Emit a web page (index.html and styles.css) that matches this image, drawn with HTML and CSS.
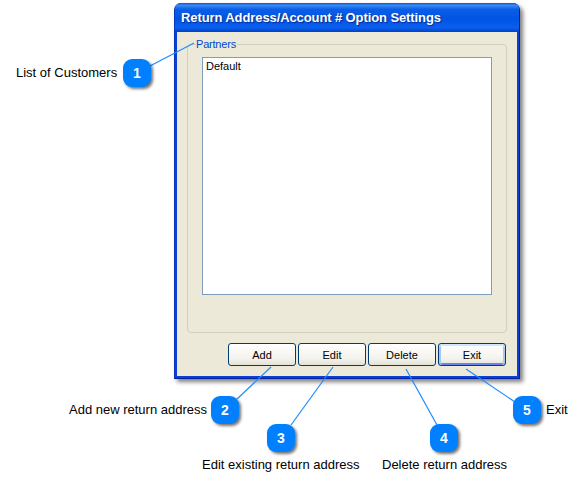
FILE: index.html
```html
<!DOCTYPE html>
<html lang="en">
<head>
<meta charset="utf-8">
<title>Return Address/Account # Option Settings</title>
<link rel="stylesheet" href="styles.css">
</head>
<body>
<main class="canvas">
  <section class="window">
    <header class="titlebar">Return Address/Account # Option Settings</header>
    <div class="client">
      <fieldset class="group">
        <legend class="group-label">Partners</legend>
        <div class="listbox">Default</div>
      </fieldset>
      <div class="actions">
        <button class="btn">Add</button>
        <button class="btn">Edit</button>
        <button class="btn">Delete</button>
        <button class="btn btn-default">Exit</button>
      </div>
    </div>
  </section>
  <svg class="leaders" width="585" height="489" viewBox="0 0 585 489" aria-hidden="true">
    <line x1="150" y1="66" x2="194" y2="43"/>
    <line x1="271" y1="367" x2="237" y2="399"/>
    <line x1="333" y1="367" x2="291" y2="425"/>
    <line x1="406" y1="369" x2="437" y2="425"/>
    <line x1="466" y1="369" x2="515" y2="402"/>
  </svg>
  <span class="badge b1">1</span>
  <span class="badge b2">2</span>
  <span class="badge b3">3</span>
  <span class="badge b4">4</span>
  <span class="badge b5">5</span>
  <span class="label l1">List of Customers</span>
  <span class="label l2">Add new return address</span>
  <span class="label l3">Edit existing return address</span>
  <span class="label l4">Delete return address</span>
  <span class="label l5">Exit</span>
</main>
</body>
</html>
```
FILE: styles.css
```css
html, body { margin: 0; padding: 0; background: #fff; }
.canvas { position: relative; width: 585px; height: 489px; overflow: hidden; font-family: "Liberation Sans", Arial, sans-serif; }

.window {
  position: absolute; left: 174px; top: 3px; width: 346px; height: 376px;
  box-sizing: border-box; display: flex; flex-direction: column;
  background: #0a3fd8; border-radius: 7px 7px 0 0;
  border-right: 1px solid #00229a; border-bottom: 1px solid #00229a; border-left: 1px solid #0a37b8;
  box-shadow: 3px 3px 4px rgba(0,0,0,.5);
}
.titlebar {
  height: 29px; box-sizing: border-box; padding: 0 0 0 6px; flex: none;
  display: flex; align-items: center;
  color: #fff; font-size: 13px; font-weight: 700; letter-spacing: -.1px; white-space: nowrap;
  text-shadow: 1px 1px 1px #0a2a90;
  border-radius: 6px 6px 0 0;
  background: linear-gradient(#0a55d8 0, #3a8cf5 8%, #0a5ee6 22%, #0054e3 55%, #0a5fee 85%, #0040c8 100%);
}
.client {
  flex: 1; margin: 0 2px 2px; background: #ece9d8; display: flex; flex-direction: column;
  padding: 6px 10px 10px 10px; min-height: 0;
}
.group {
  margin: 0; padding: 6px 14px 0 14px; height: 295px; box-sizing: border-box;
  border: 1px solid #d0d0bf; border-radius: 4px; min-width: 0;
}
.group-label { padding: 0 1px 0 0; margin-left: -6px; color: #0046d5; font-size: 11px; line-height: 13px; letter-spacing: -.2px; }
.listbox {
  height: 238px; box-sizing: border-box; background: #fff; border: 1px solid #7f9db9;
  padding: 1px 3px; font-size: 11px; line-height: 14px; color: #000;
}
.actions { display: flex; justify-content: flex-end; gap: 2px; margin-top: 10px; padding-right: 1px; }
.btn {
  width: 68px; height: 23px; padding: 0; box-sizing: border-box;
  border: 1px solid #003c74; border-radius: 3px;
  background: linear-gradient(#fff, #f3f2ec 70%, #e4e2d6);
  font-family: inherit; font-size: 11px; color: #000;
}
.btn-default { box-shadow: inset 0 2px 0 #cee7ff, inset 2px 0 0 #a8c6ee, inset -2px 0 0 #a8c6ee, inset 0 -2px 0 #6982ee; }

.leaders { position: absolute; left: 0; top: 0; pointer-events: none; }
.leaders line { stroke: #1e8cff; stroke-width: 1.2; }

.badge {
  position: absolute; width: 28px; height: 28px; border-radius: 9px;
  background: #0080ff; color: #fff; font-size: 14px; font-weight: 700;
  display: flex; align-items: center; justify-content: center;
  box-shadow: 2px 2px 3px rgba(0,0,0,.55);
}
.b1 { left: 123px; top: 59px; }
.b2 { left: 211px; top: 396px; }
.b3 { left: 267px; top: 424px; }
.b4 { left: 430px; top: 424px; }
.b5 { left: 513px; top: 396px; }

.label { position: absolute; font-size: 13px; line-height: 16px; color: #000; white-space: nowrap; }
.l1 { left: 16px; top: 65px; }
.l2 { left: 69px; top: 402px; }
.l3 { left: 202px; top: 457px; }
.l4 { left: 382px; top: 457px; }
.l5 { left: 546px; top: 402px; }
```
